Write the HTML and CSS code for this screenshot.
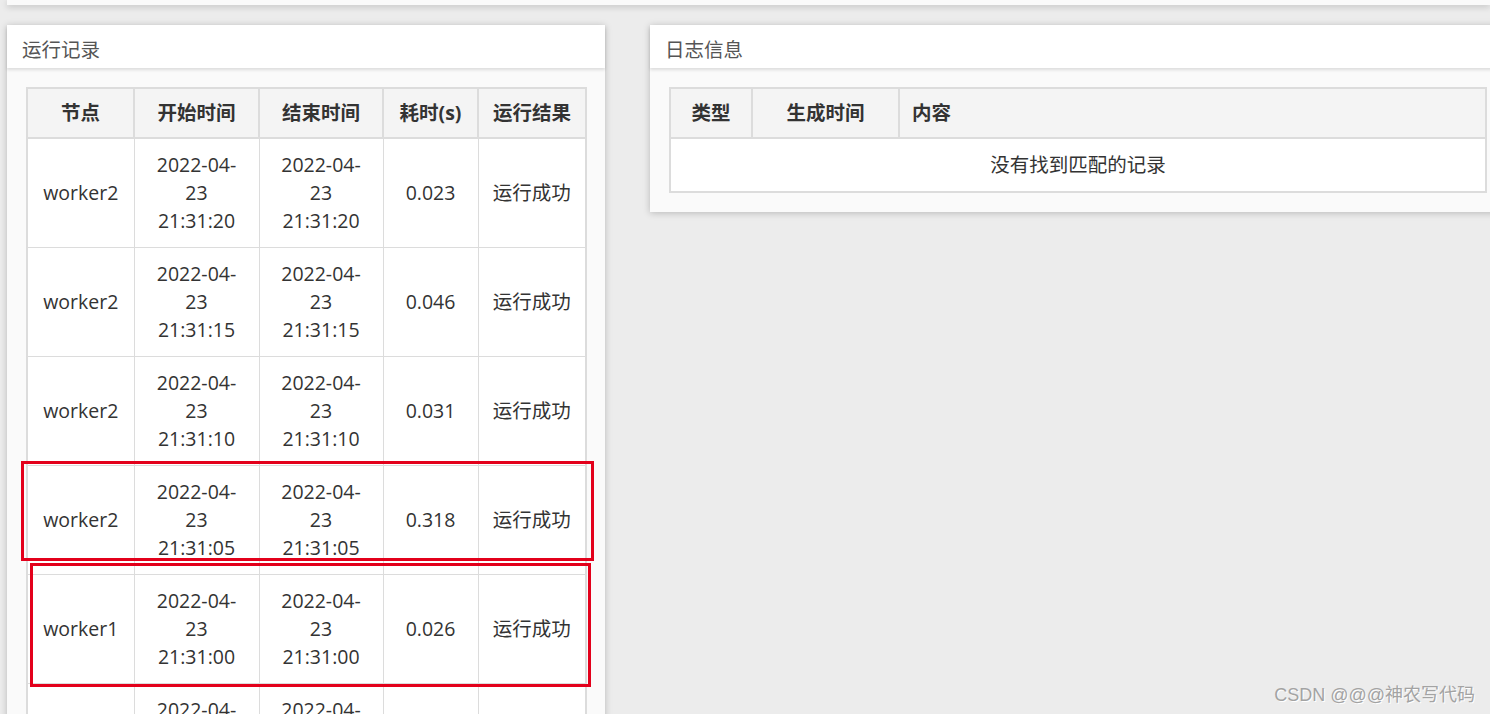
FILE: index.html
```html
<!DOCTYPE html>
<html lang="zh-CN">
<head>
    <meta charset="UTF-8">
    <title>运行记录</title>
    <link rel="stylesheet" href="styles.css">
</head>
<body>
    <div class="topbar"></div>

    <div class="main">
        <section class="panel panel-run">
            <div class="panel-head">运行记录</div>
            <div class="panel-body">
                <table class="grid run-grid">
                    <thead>
                        <tr>
                            <th class="c-node">节点</th>
                            <th class="c-start">开始时间</th>
                            <th class="c-end">结束时间</th>
                            <th class="c-cost">耗时(s)</th>
                            <th class="c-result">运行结果</th>
                        </tr>
                    </thead>
                    <tbody>
                        <tr>
                            <td>worker2</td>
                            <td class="c-time">2022-04-23 21:31:20</td>
                            <td class="c-time">2022-04-23 21:31:20</td>
                            <td>0.023</td>
                            <td>运行成功</td>
                        </tr>
                        <tr>
                            <td>worker2</td>
                            <td class="c-time">2022-04-23 21:31:15</td>
                            <td class="c-time">2022-04-23 21:31:15</td>
                            <td>0.046</td>
                            <td>运行成功</td>
                        </tr>
                        <tr>
                            <td>worker2</td>
                            <td class="c-time">2022-04-23 21:31:10</td>
                            <td class="c-time">2022-04-23 21:31:10</td>
                            <td>0.031</td>
                            <td>运行成功</td>
                        </tr>
                        <tr>
                            <td>worker2</td>
                            <td class="c-time">2022-04-23 21:31:05</td>
                            <td class="c-time">2022-04-23 21:31:05</td>
                            <td>0.318</td>
                            <td>运行成功</td>
                        </tr>
                        <tr>
                            <td>worker1</td>
                            <td class="c-time">2022-04-23 21:31:00</td>
                            <td class="c-time">2022-04-23 21:31:00</td>
                            <td>0.026</td>
                            <td>运行成功</td>
                        </tr>
                        <tr>
                            <td>worker2</td>
                            <td class="c-time">2022-04-23 21:30:55</td>
                            <td class="c-time">2022-04-23 21:30:55</td>
                            <td>0.027</td>
                            <td>运行成功</td>
                        </tr>
                    </tbody>
                </table>
            </div>
        </section>

        <section class="panel panel-log">
            <div class="panel-head">日志信息</div>
            <div class="panel-body">
                <table class="grid log-grid">
                    <thead>
                        <tr>
                            <th class="c-type">类型</th>
                            <th class="c-gen">生成时间</th>
                            <th class="c-content">内容</th>
                        </tr>
                    </thead>
                    <tbody>
                        <tr>
                            <td colspan="3" class="empty">没有找到匹配的记录</td>
                        </tr>
                    </tbody>
                </table>
            </div>
        </section>
    </div>

    <!-- annotation boxes drawn over the table -->
    <div class="mark mark-first"></div>
    <div class="mark mark-second"></div>

    <div class="watermark">CSDN @@@神农写代码</div>
</body>
</html>
```

FILE: styles.css
```css
body {
    margin: 0;
    height: 714px;
    overflow: hidden;
    background-color: #ececec;
    font-family: "Open Sans", "Noto Sans CJK SC", sans-serif;
    color: #333;
    position: relative;
}
.topbar {
    margin-left: 7px;
    height: 5px;
    background-color: #fafafa;
    box-shadow: 0 2px 6px rgba(0, 0, 0, 0.18);
}
.main {
    display: flex;
    align-items: flex-start;
    gap: 45px;
    padding: 20px 0 0 7px;
}
.panel {
    flex-shrink: 0;
    background-color: #fafafa;
    box-shadow: 0 1px 7px rgba(0, 0, 0, 0.22);
}
.panel-run {
    width: 598px;
}
.panel-log {
    width: 856px;
}
.panel-head {
    height: 43px;
    line-height: 50px;
    padding-left: 15px;
    background-color: #fff;
    font-size: 19.5px;
    color: #555;
    box-shadow: 0 2px 3px rgba(0, 0, 0, 0.12);
    position: relative;
}
.panel-body {
    padding: 19px 18px 19px 19px;
}
.grid {
    border-collapse: collapse;
    border: 2px solid #dcdcdc;
    background-color: #fff;
    font-size: 19.5px;
    line-height: 28px;
    table-layout: fixed;
}
.grid th,
.grid td {
    box-sizing: border-box;
}
.grid th {
    height: 50px;
    padding: 0 6px;
    font-weight: bold;
    background-color: #f4f4f4;
    border: 2px solid #dcdcdc;
    text-align: center;
}
.grid td {
    padding: 12px 6px;
    border: 1px solid #dcdcdc;
    text-align: center;
    vertical-align: middle;
}
.run-grid {
    width: 561px;
}
.run-grid .c-node { width: 107px; }
.run-grid .c-start { width: 125px; }
.run-grid .c-end { width: 124px; }
.run-grid .c-cost { width: 95px; }
.run-grid td.c-time {
    padding-left: 14px;
    padding-right: 14px;
}
.log-grid {
    width: 818px;
}
.log-grid .c-type { width: 82px; }
.log-grid .c-gen { width: 147px; }
.log-grid .c-content {
    text-align: left;
    padding-left: 12px;
}
.mark {
    position: absolute;
    border: 3px solid #e3001b;
}
.mark-first {
    left: 21px;
    top: 461px;
    width: 567px;
    height: 94px;
}
.mark-second {
    left: 30px;
    top: 563px;
    width: 555px;
    height: 118px;
}
.watermark {
    position: absolute;
    right: 15px;
    bottom: 8px;
    font-family: "Liberation Sans", "Noto Sans CJK SC", sans-serif;
    font-size: 18px;
    color: #a3a3a3;
    text-shadow: 1px 1px 0 #fff;
}
```
